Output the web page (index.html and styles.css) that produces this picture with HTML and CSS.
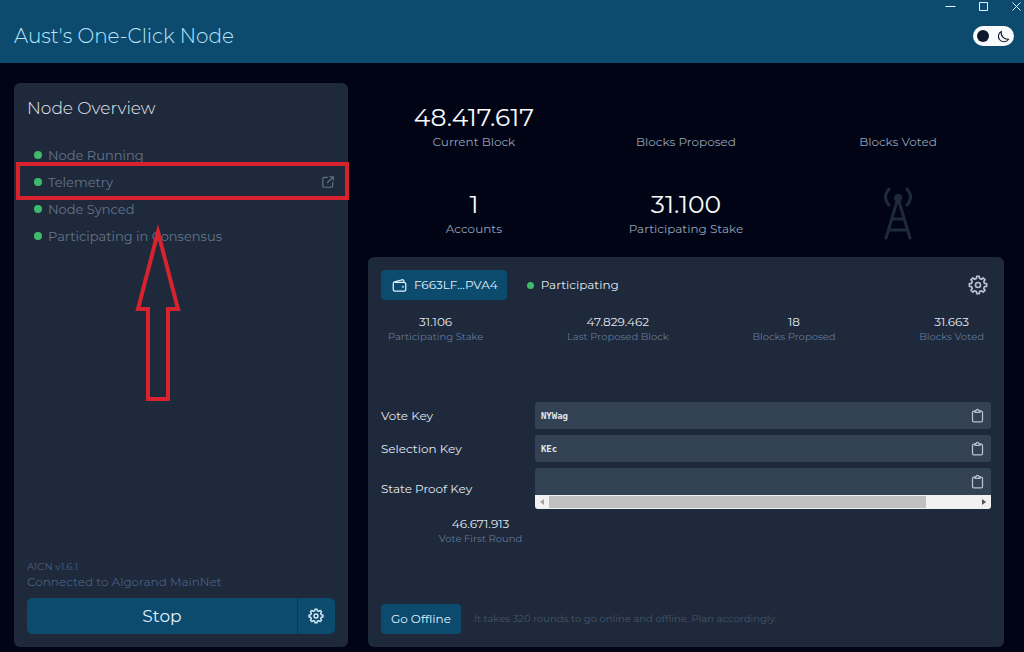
FILE: index.html
```html
<!DOCTYPE html>
<html lang="en">
<head>
<meta charset="utf-8">
<meta name="viewport" content="width=device-width, initial-scale=1">
<title>Aust's One-Click Node</title>
<link rel="stylesheet" href="styles.css">
</head>
<body>
<svg class="sprite" aria-hidden="true">
  <symbol id="gear" viewBox="0 0 24 24">
    <path d="M10.1 4.2L10.4 1.6H13.6L13.9 4.2L16.1 5.1L18.2 3.5L20.5 5.8L18.9 7.9L19.8 10.1L22.4 10.4V13.6L19.8 13.9L18.9 16.1L20.5 18.2L18.2 20.5L16.1 18.9L13.9 19.8L13.6 22.4H10.4L10.1 19.8L7.9 18.9L5.8 20.5L3.5 18.2L5.1 16.1L4.2 13.9L1.6 13.6V10.4L4.2 10.1L5.1 7.9L3.5 5.8L5.8 3.5L7.9 5.1Z"/>
    <circle cx="12" cy="12" r="3"/>
  </symbol>
  <symbol id="clipboard" viewBox="0 0 24 24">
    <path d="M8 5H6a2 2 0 0 0-2 2v13a2 2 0 0 0 2 2h12a2 2 0 0 0 2-2V7a2 2 0 0 0-2-2h-2"/>
    <path d="M8 7V4h2a2 2 0 0 1 4 0h2v3z"/>
  </symbol>
</svg>

<header class="header">
  <div class="window-controls">
    <button class="window-button" type="button" aria-label="Minimize"><svg viewBox="0 0 11 11"><path d="M0.500 5.500H10.500"/></svg></button>
    <button class="window-button" type="button" aria-label="Maximize"><svg viewBox="0 0 11 11"><path d="M1.500 1.500H9.500V9.500H1.500Z"/></svg></button>
    <button class="window-button" type="button" aria-label="Close"><svg viewBox="0 0 11 11"><path d="M1.500 1.500L9.500 9.500M9.500 1.500L1.500 9.500"/></svg></button>
  </div>
  <div class="header-row">
    <h1 class="app-title">Aust's One-Click Node</h1>
    <label class="theme-switch">
      <input class="theme-input" type="checkbox" role="switch" aria-label="Dark mode" checked>
      <svg class="moon" viewBox="0 0 24 24" aria-hidden="true"><path d="M8 2.500C2.500 6 1 13 4.500 17.500C8.500 23 17 23 21.500 17C13 17.500 6 11 8 2.500Z"/></svg>
    </label>
  </div>
</header>

<main class="main">
  <section class="panel overview">
    <h2 class="overview-title">Node Overview</h2>
    <ul class="status-list">
      <li class="status-item"><span class="dot"></span>Node Running</li>
      <li class="status-item highlighted"><span class="dot"></span>Telemetry
        <a class="external" href="#telemetry" aria-label="Open telemetry"><svg viewBox="0 0 24 24"><path d="M11 4H6a3 3 0 0 0-3 3v11a3 3 0 0 0 3 3h11a3 3 0 0 0 3-3v-5M15 3h6v6M21 3L11 13"/></svg></a>
      </li>
      <li class="status-item"><span class="dot"></span>Node Synced</li>
      <li class="status-item"><span class="dot"></span>Participating in Consensus</li>
    </ul>
    <svg class="arrow" viewBox="0 0 48 180" aria-hidden="true"><path d="M24 9L44 86H34V176H14V86H4Z"/></svg>
    <div class="overview-footer">
      <p class="version">A1CN v1.6.1</p>
      <p class="network">Connected to Algorand MainNet</p>
      <div class="split-button">
        <button class="stop" type="button">Stop</button>
        <button class="node-settings" type="button" aria-label="Node settings"><svg class="icon-small"><use href="#gear"/></svg></button>
      </div>
    </div>
  </section>

  <div class="content">
    <section class="stats">
      <div class="stat"><div class="stat-value">48.417.617</div><div class="stat-label">Current Block</div></div>
      <div class="stat"><div class="stat-value"></div><div class="stat-label">Blocks Proposed</div></div>
      <div class="stat"><div class="stat-value"></div><div class="stat-label">Blocks Voted</div></div>
      <div class="stat"><div class="stat-value">1</div><div class="stat-label">Accounts</div></div>
      <div class="stat"><div class="stat-value">31.100</div><div class="stat-label">Participating Stake</div></div>
      <div class="stat antenna">
        <svg viewBox="0 0 32 56" aria-hidden="true">
          <circle cx="16" cy="12" r="4"/>
          <path d="M16 12L4 52M16 12L28 52M11 33H21M7 44H25M7 3Q0 11 7 19M25 3Q32 11 25 19"/>
        </svg>
      </div>
    </section>

    <section class="panel account">
      <div class="account-head">
        <button class="button wallet" type="button">
          <svg viewBox="0 0 24 24" aria-hidden="true"><path d="M5 7h14a3 3 0 0 1 3 3v8a3 3 0 0 1-3 3H5a3 3 0 0 1-3-3V9a3 3 0 0 1 2-3L16 3a2 2 0 0 1 3 2v2"/><circle cx="17.500" cy="14" r="0.500"/></svg>
          F663LF...PVA4
        </button>
        <span class="participating"><span class="dot"></span>Participating</span>
        <button class="account-settings" type="button" aria-label="Account settings"><svg class="icon-large"><use href="#gear"/></svg></button>
      </div>

      <div class="account-stats">
        <div class="figure"><div class="figure-value">31.106</div><div class="figure-label">Participating Stake</div></div>
        <div class="figure"><div class="figure-value">47.829.462</div><div class="figure-label">Last Proposed Block</div></div>
        <div class="figure"><div class="figure-value">18</div><div class="figure-label">Blocks Proposed</div></div>
        <div class="figure"><div class="figure-value">31.663</div><div class="figure-label">Blocks Voted</div></div>
      </div>

      <dl class="keys">
        <dt class="key-name">Vote Key</dt>
        <dd class="key-box"><div class="key-line"><code class="key-value">NYWag</code><button class="copy" type="button" aria-label="Copy vote key"><svg><use href="#clipboard"/></svg></button></div></dd>
        <dt class="key-name">Selection Key</dt>
        <dd class="key-box"><div class="key-line"><code class="key-value">KEc</code><button class="copy" type="button" aria-label="Copy selection key"><svg><use href="#clipboard"/></svg></button></div></dd>
        <dt class="key-name">State Proof Key</dt>
        <dd class="key-box">
          <div class="key-line"><code class="key-value"></code><button class="copy" type="button" aria-label="Copy state proof key"><svg><use href="#clipboard"/></svg></button></div>
          <div class="scrollbar">
            <svg class="scroll-arrow faded" viewBox="0 0 14 14"><path d="M9 4V10L5 7Z"/></svg>
            <div class="track"><div class="thumb"></div></div>
            <svg class="scroll-arrow" viewBox="0 0 14 14"><path d="M5 4V10L9 7Z"/></svg>
          </div>
        </dd>
      </dl>

      <div class="rounds">
        <div class="figure"><div class="figure-value">46.671.913</div><div class="figure-label">Vote First Round</div></div>
      </div>

      <div class="account-foot">
        <button class="button offline" type="button">Go Offline</button>
        <p class="hint">It takes 320 rounds to go online and offline. Plan accordingly.</p>
      </div>
    </section>
  </div>
</main>
</body>
</html>
```
FILE: styles.css
```css
* {
  box-sizing: border-box;
  margin: 0;
  padding: 0;
}

body {
  display: flex;
  flex-direction: column;
  min-height: 100vh;
  background: #010414;
  color: #e2e8f0;
  font-family: Montserrat, Inter, sans-serif;
  font-size: 12px;
  line-height: 18px;
}

button {
  border: 0;
  background: none;
  color: inherit;
  font: inherit;
  cursor: pointer;
}

svg {
  display: block;
  fill: none;
  stroke: currentColor;
  stroke-linecap: round;
  stroke-linejoin: round;
}

.sprite {
  position: absolute;
  width: 0;
  height: 0;
}

.header {
  background: #0c4a6e;
  color: #bae6fd;
  padding-bottom: 13px;
}

.window-controls {
  display: flex;
  justify-content: flex-end;
  gap: 22px;
  height: 12px;
  padding-right: 2px;
  color: #e0f2fe;
}

.window-button svg {
  width: 11px;
  height: 11px;
  stroke-linecap: butt;
}

.header-row {
  display: flex;
  align-items: center;
  justify-content: space-between;
  padding: 10px 10px 0 14px;
}

.app-title {
  font-size: 20px;
  font-weight: 300;
  line-height: 28px;
}

.theme-switch {
  display: flex;
  align-items: center;
  justify-content: space-between;
  width: 41px;
  height: 20px;
  padding: 0 4px;
  border-radius: 10px;
  background: #f8fafc;
  color: #0f172a;
}

.theme-input {
  appearance: none;
  width: 12px;
  height: 12px;
  border-radius: 50%;
  background: #0f172a;
}

.moon {
  width: 13px;
  height: 13px;
  stroke-width: 2;
}

.main {
  flex: 1;
  display: grid;
  grid-template-columns: minmax(0, 21fr) minmax(0, 40fr);
  gap: 20px;
  padding: 20px 20px 5px 14px;
}

.panel {
  display: flex;
  flex-direction: column;
  border-radius: 6px;
  background: #1e293b;
}

.overview {
  position: relative;
  padding: 13px;
}

.overview-title {
  font-size: 17px;
  font-weight: 300;
  line-height: 24px;
}

.status-list {
  list-style: none;
  margin-top: 21px;
  color: #64748b;
  font-size: 13px;
}

.status-item {
  position: relative;
  display: flex;
  align-items: center;
  gap: 6px;
  height: 27px;
  padding: 0 0 0 7px;
}

.dot {
  width: 8px;
  height: 8px;
  border-radius: 50%;
  background: #3fba6c;
}

.external {
  margin-left: auto;
  color: #64748b;
}

.external svg {
  width: 14px;
  height: 14px;
  stroke-width: 2;
}

.highlighted::after {
  content: "";
  position: absolute;
  inset: -6px -14px -5px -11px;
  border: 4px solid #d8232f;
  pointer-events: none;
}

.arrow {
  position: absolute;
  top: 140px;
  left: 120px;
  width: 48px;
  height: 180px;
  color: #d8232f;
  stroke-width: 4;
  stroke-linecap: butt;
  stroke-linejoin: miter;
  stroke-miterlimit: 10;
}

.overview-footer {
  margin-top: auto;
  color: #475f83;
}

.version {
  font-size: 10px;
  line-height: 14px;
}

.network {
  font-size: 12px;
  line-height: 16px;
}

.split-button {
  display: flex;
  height: 36px;
  margin-top: 8px;
  border-radius: 5px;
  background: #0c4a6e;
  color: #e0f2fe;
}

.stop {
  flex: 1;
  font-size: 17px;
}

.node-settings {
  display: grid;
  place-items: center;
  width: 38px;
  border-left: 1px solid #083a5c;
}

.icon-small {
  width: 16px;
  height: 16px;
  stroke-width: 2;
}

.icon-large {
  width: 20px;
  height: 20px;
  stroke-width: 2;
}

.content {
  display: flex;
  flex-direction: column;
}

.stats {
  display: grid;
  grid-template-columns: repeat(3, minmax(0, 1fr));
  text-align: center;
}

.stat {
  height: 87px;
  padding-top: 18px;
}

.stat-value {
  height: 32px;
  color: #f8fafc;
  font-size: 25px;
  line-height: 32px;
}

.stat-label {
  color: #94a3b8;
  line-height: 17px;
}

.antenna {
  display: grid;
  justify-content: center;
  padding-top: 16px;
  color: #1e293b;
}

.antenna svg {
  width: 32px;
  height: 56px;
  stroke-width: 3;
}

.antenna circle {
  fill: currentColor;
  stroke: none;
}

.account {
  flex: 1;
  padding: 13px;
}

.account-head {
  display: flex;
  align-items: center;
}

.button {
  height: 30px;
  border-radius: 4px;
  background: #0c4a6e;
  color: #e0f2fe;
}

.wallet {
  display: flex;
  align-items: center;
  gap: 7px;
  padding: 0 9px 0 11px;
}

.wallet svg {
  width: 15px;
  height: 15px;
  stroke-width: 2;
}

.participating {
  display: flex;
  align-items: center;
  gap: 7px;
  margin-left: 20px;
}

.participating .dot {
  width: 7px;
  height: 7px;
}

.account-settings {
  margin-left: auto;
  padding: 0 3px;
  color: #b6c2d2;
}

.account-stats {
  display: flex;
  justify-content: space-between;
  margin-top: 14px;
  padding: 0 7px;
}

.figure {
  text-align: center;
}

.figure-value {
  line-height: 16px;
}

.figure-label {
  color: #64789a;
  font-size: 10px;
  line-height: 14px;
}

.keys {
  display: grid;
  grid-template-columns: 154px minmax(0, 1fr);
  align-items: center;
  row-gap: 6px;
  margin-top: 58px;
}

.key-box {
  border-radius: 3px;
  background: #334155;
  overflow: hidden;
}

.key-line {
  display: flex;
  align-items: center;
  justify-content: space-between;
  height: 27px;
  padding: 0 6px;
}

.key-value {
  font: bold 9px/14px Consolas, "DejaVu Sans Mono", monospace;
}

.copy {
  color: #b6c2d2;
}

.copy svg {
  width: 15px;
  height: 15px;
  stroke-width: 2;
}

.scrollbar {
  display: flex;
  height: 14px;
  background: #f1f1f1;
}

.scroll-arrow {
  width: 14px;
  height: 14px;
  color: #505050;
  fill: currentColor;
  stroke: none;
}

.faded {
  color: #a3a3a3;
}

.track {
  flex: 1;
  padding: 1px 0;
}

.thumb {
  width: 88%;
  height: 100%;
  background: #c1c1c1;
}

.rounds {
  display: grid;
  grid-template-columns: repeat(3, minmax(0, 1fr));
  gap: 6px;
  margin-top: 7px;
}

.account-foot {
  display: flex;
  align-items: center;
  gap: 13px;
  margin-top: auto;
}

.offline {
  padding: 0 10px;
}

.hint {
  color: #475569;
  font-size: 10px;
}
```
